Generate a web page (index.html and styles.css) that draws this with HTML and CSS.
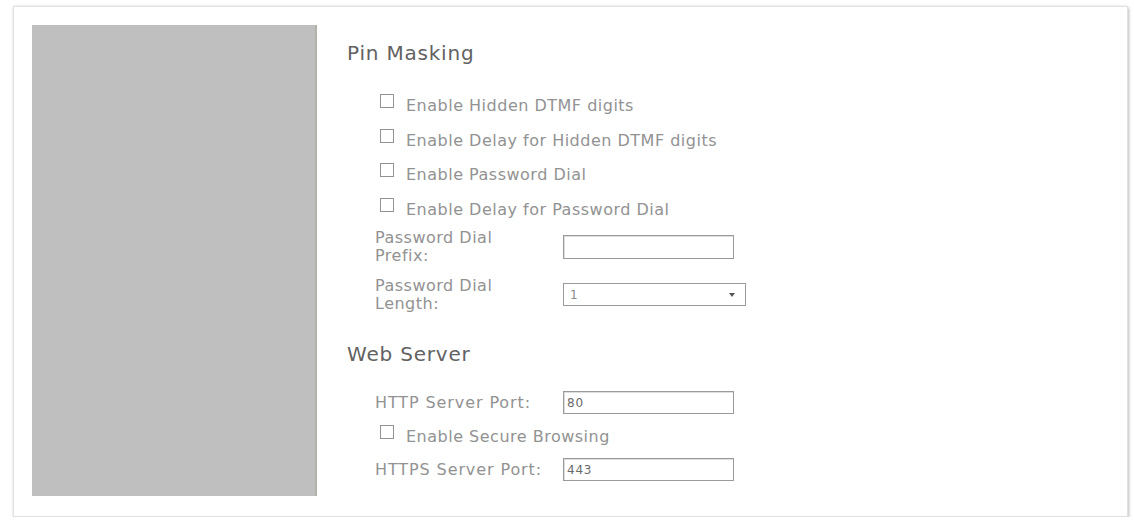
FILE: index.html
```html
<!DOCTYPE html>
<html lang="en">
<head>
<meta charset="utf-8">
<title>Settings</title>
<link rel="stylesheet" href="styles.css">
</head>
<body>
<div class="page">
  <div class="card">
    <aside class="sidebar"></aside>
    <main class="content">
      <section class="group group-pin">
        <h2 class="group-title">Pin Masking</h2>
        <div class="fields">
          <div class="check-list">
            <label class="check"><span class="box"></span><span class="check-text">Enable Hidden DTMF digits</span></label>
            <label class="check"><span class="box"></span><span class="check-text">Enable Delay for Hidden DTMF digits</span></label>
            <label class="check"><span class="box"></span><span class="check-text">Enable Password Dial</span></label>
            <label class="check"><span class="box"></span><span class="check-text">Enable Delay for Password Dial</span></label>
          </div>
          <div class="form-rows">
            <div class="form-row">
              <span class="field-label">Password Dial Prefix:</span>
              <span class="text-input"></span>
            </div>
            <div class="form-row">
              <span class="field-label">Password Dial Length:</span>
              <span class="select-input"><span class="select-value">1</span><span class="select-arrow"></span></span>
            </div>
          </div>
        </div>
      </section>
      <section class="group group-web">
        <h2 class="group-title">Web Server</h2>
        <div class="fields">
          <div class="form-row form-row-single">
            <span class="field-label field-label-caps">HTTP Server Port:</span>
            <span class="text-input"><span class="input-value">80</span></span>
          </div>
          <label class="check check-secure"><span class="box"></span><span class="check-text">Enable Secure Browsing</span></label>
          <div class="form-row form-row-single">
            <span class="field-label field-label-caps">HTTPS Server Port:</span>
            <span class="text-input"><span class="input-value">443</span></span>
          </div>
        </div>
      </section>
    </main>
  </div>
</div>
</body>
</html>
```

FILE: styles.css
```css
* {
  box-sizing: border-box;
}

html, body {
  margin: 0;
  background: #ffffff;
}

body {
  font-family: "DejaVu Sans", Verdana, sans-serif;
  color: #929292;
}

.page {
  padding: 6px 0 0 13px;
}

/* outer white panel */
.card {
  width: 1115px;
  height: 511px;
  display: grid;
  grid-template-columns: 285px 1fr;
  padding: 18px 18px 20px 18px;
  background: #ffffff;
  border: 1px solid #e1e1e1;
  box-shadow: 1px 2px 3px rgba(0, 0, 0, 0.24), 0 -1px 2px rgba(0, 0, 0, 0.06);
}

.sidebar {
  background: #bfbfbf;
  border-right: 2px solid #b2b2ad;
}

.content {
  padding: 16px 0 0 30px;
}

.group-title {
  margin: 0;
  font-size: 20px;
  line-height: 24px;
  font-weight: normal;
  letter-spacing: 0.8px;
  color: #626262;
}

.group-pin .fields {
  margin: 24px 0 0 28px;
}

.group-web {
  margin-top: 30px;
}

.group-web .fields {
  margin: 25px 0 0 28px;
}

/* checkbox rows */
.check {
  display: flex;
  align-items: center;
  height: 34.5px;
  padding-left: 5px;
  font-size: 16px;
  letter-spacing: 0.5px;
  line-height: 20px;
}

.box {
  width: 14px;
  height: 14px;
  flex: none;
  border: 1px solid #939393;
  background: #fff;
  margin: 0 12px 10px 0;
}

/* label + control rows */
.form-rows {
  margin-top: 2px;
  display: flex;
  flex-direction: column;
  gap: 13px;
}

.form-row {
  display: grid;
  grid-template-columns: 188px auto;
  align-items: center;
  justify-content: start;
}

.field-label {
  max-width: 170px;
  font-size: 16px;
  line-height: 17.5px;
  letter-spacing: 0.5px;
}

.field-label-caps {
  letter-spacing: 0.9px;
}

.text-input {
  display: flex;
  align-items: center;
  width: 171px;
  height: 24px;
  padding-left: 3px;
  border: 1px solid #9a9a9a;
  box-shadow: inset 1px 1px 0 #dedede;
  background: #fff;
}

.form-row-single .text-input {
  height: 23px;
}

.input-value {
  font-size: 12px;
  letter-spacing: 0.8px;
  color: #6a6a6a;
}

.select-input {
  display: flex;
  align-items: center;
  justify-content: space-between;
  width: 183px;
  height: 23px;
  padding: 0 10px 0 6px;
  border: 1px solid #9a9a9a;
  background: #fff;
}

.select-value {
  font-size: 12px;
  color: #8a8a8a;
}

.select-arrow {
  width: 0;
  height: 0;
  border-left: 3px solid transparent;
  border-right: 3px solid transparent;
  border-top: 4px solid #555;
}

.check-secure {
  height: 23px;
  margin: 11px 0 10px;
}
```
